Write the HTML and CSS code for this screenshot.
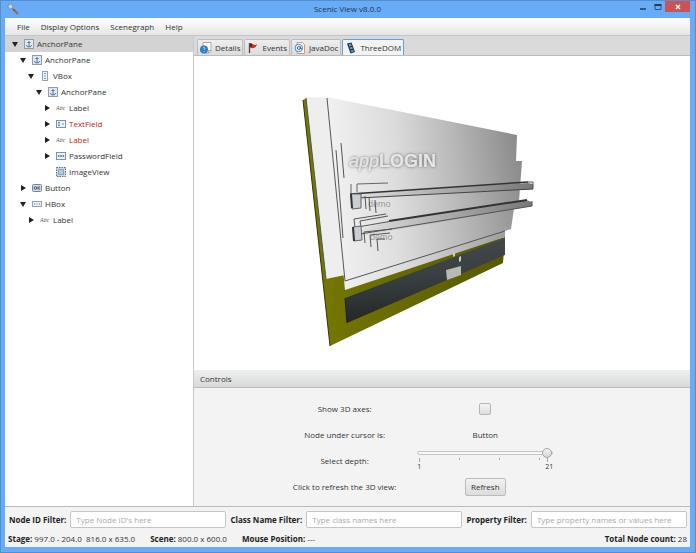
FILE: index.html
```html
<!DOCTYPE html>
<html lang="en">
<head>
<meta charset="utf-8">
<title>Scenic View v8.0.0</title>
<link rel="stylesheet" href="styles.css">
</head>
<body>
<svg class="defs" aria-hidden="true">
  <symbol id="open" viewBox="0 0 8 8"><path d="M1 2h6L4 7z" fill="#222"/></symbol>
  <symbol id="closed" viewBox="0 0 8 8"><path d="M2 1v6l5-3z" fill="#222"/></symbol>
  <symbol id="anchor" viewBox="0 0 10 10"><rect x=".5" y=".5" width="9" height="9" fill="#e0e8f0" stroke="#8f9dab"/><path d="M5 2v6M3.500 3.500h3M2.500 6q0 2 2.500 2t2.500-2" fill="none" stroke="#54789b"/></symbol>
  <symbol id="vbox" viewBox="0 0 10 10"><rect x="2.500" y=".5" width="5" height="9" fill="#edf3f8" stroke="#94a3b1"/><path d="M4 2.500h2M4 5h2M4 7.500h2" stroke="#7c9dbb"/></symbol>
  <symbol id="hbox" viewBox="0 0 10 10"><rect x=".5" y="2.500" width="9" height="5" fill="#edf3f8" stroke="#94a3b1"/><path d="M2.500 4v2M5 4v2M7.500 4v2" stroke="#9ab0c4"/></symbol>
  <symbol id="field" viewBox="0 0 10 10"><rect x=".5" y="1.500" width="9" height="7" fill="#edf4fb" stroke="#7e92a5"/><path d="M2 3.500h2M3 3.500v3M2 6.500h2M6 5h2" stroke="#6c94bb"/></symbol>
  <symbol id="password" viewBox="0 0 10 10"><rect x=".5" y="1.500" width="9" height="7" fill="#edf4fb" stroke="#7e92a5"/><path d="M2 5h1.500M4.300 5h1.500M6.600 5h1.500" stroke="#345b82" stroke-width="1.500"/></symbol>
  <symbol id="image" viewBox="0 0 10 10"><rect x=".5" y=".5" width="9" height="9" fill="#cbdbea" stroke="#55718c" stroke-dasharray="1.500 1"/><rect x="2.500" y="2.500" width="5" height="5" fill="#b3cbe0" stroke="#8ba4ba"/></symbol>
  <symbol id="ok" viewBox="0 0 10 10"><rect x=".5" y="1.500" width="9" height="7" rx="1" fill="#cfd9e3" stroke="#74889b"/><circle cx="3.400" cy="5" r="1.300" fill="none" stroke="#2d4257" stroke-width=".8"/><path d="M6 3.500v3M8 3.500 6.200 5 8 6.500" fill="none" stroke="#2d4257" stroke-width=".8"/></symbol>
</svg>
<div class="window">
  <header class="titlebar">
    <svg class="app-icon" viewBox="0 0 12 12"><path d="m6 6 5 5" stroke="#9b6844" stroke-width="2"/><path d="m5 5 3 3" stroke="#4d5661"/><circle cx="3.500" cy="3.500" r="2.500" fill="#b9d4ec" stroke="#83909d"/></svg>
    <h1>Scenic View v8.0.0</h1>
    <div class="window-buttons">
      <button aria-label="Minimize"><svg viewBox="0 0 8 8"><path d="M1 6h6" stroke="#253a55" stroke-width="1.500"/></svg></button>
      <button aria-label="Maximize"><svg viewBox="0 0 8 8"><path d="M1 2v4.500h6V2" fill="none" stroke="#3b5475"/><path d="M.5 2h7" stroke="#253a55" stroke-width="2"/></svg></button>
      <button class="close" aria-label="Close"><svg viewBox="0 0 8 8"><path d="m2 2 4 4M6 2 2 6" stroke="#fff" stroke-width="1.400"/></svg></button>
    </div>
  </header>
  <div class="content">
    <nav class="menu"><button>File</button><button>Display Options</button><button>Scenegraph</button><button>Help</button></nav>
    <main class="split">
      <aside class="tree">
        <ul>
          <li><div class="row selected"><svg><use href="#open"/></svg><svg class="icon"><use href="#anchor"/></svg>AnchorPane</div>
            <ul>
              <li><div class="row"><svg><use href="#open"/></svg><svg class="icon"><use href="#anchor"/></svg>AnchorPane</div>
                <ul>
                  <li><div class="row"><svg><use href="#open"/></svg><svg class="icon"><use href="#vbox"/></svg>VBox</div>
                    <ul>
                      <li><div class="row"><svg><use href="#open"/></svg><svg class="icon"><use href="#anchor"/></svg>AnchorPane</div>
                        <ul>
                          <li><div class="row"><svg><use href="#closed"/></svg><span class="abc">Abc</span>Label</div></li>
                          <li><div class="row changed"><svg><use href="#closed"/></svg><svg class="icon"><use href="#field"/></svg>TextField</div></li>
                          <li><div class="row changed"><svg><use href="#closed"/></svg><span class="abc">Abc</span>Label</div></li>
                          <li><div class="row"><svg><use href="#closed"/></svg><svg class="icon"><use href="#password"/></svg>PasswordField</div></li>
                          <li><div class="row"><svg></svg><svg class="icon"><use href="#image"/></svg>ImageView</div></li>
                        </ul>
                      </li>
                    </ul>
                  </li>
                </ul>
              </li>
              <li><div class="row"><svg><use href="#closed"/></svg><svg class="icon"><use href="#ok"/></svg>Button</div></li>
              <li><div class="row"><svg><use href="#open"/></svg><svg class="icon"><use href="#hbox"/></svg>HBox</div>
                <ul><li><div class="row"><svg><use href="#closed"/></svg><span class="abc">Abc</span>Label</div></li></ul>
              </li>
            </ul>
          </li>
        </ul>
      </aside>
      <section class="detail">
        <div class="tabs" role="tablist">
          <button role="tab"><svg viewBox="0 0 12 12"><path d="M3 .5h8v9L8.500 11H3z" fill="#fff" stroke="#a5aaae"/><path d="M11 8.500H8.500V11" fill="#e3e7ea" stroke="#a5aaae"/><circle cx="4" cy="7.500" r="4" fill="#2f7dc5"/><path d="M2.800 6.200q1.200-1.500 2.200 0Q5 7 4 7.800M4 9v1" fill="none" stroke="#a9d6fa"/></svg>Details</button>
          <button role="tab"><svg viewBox="0 0 12 12"><path d="M2.500 1v10" stroke="#454545" stroke-width="1.300"/><path d="M3 1.500q2 0 3.500 1t4-.5L8.500 5q-2 2-5.500.5z" fill="#c5301f"/><path d="M3 1.500h2v3H3z" fill="#641b16"/></svg>Events</button>
          <button role="tab"><svg viewBox="0 0 12 12"><path d="M3 .5h5.500l2 2v9H3z" fill="#fff" stroke="#c99e7a"/><circle cx="4.800" cy="6" r="3.800" fill="#e7f2fc" stroke="#4b8cc8"/><circle cx="4.800" cy="6" r="1.500" fill="none" stroke="#316fa9"/><path d="M6.500 4.500v2.300q1 .5 1.500-.8" fill="none" stroke="#316fa9"/></svg>JavaDoc</button>
          <button role="tab" aria-selected="true" class="active"><svg viewBox="0 0 12 12"><path d="m2 1.500 4.500-1L10 10l-4.500 1.500z" fill="#24303e"/><path d="m3.500 2.200 2.400-.6.8 2.200-2.400.7zm1.200 3.300 2.400-.7.7 2-2.400.7zM5.800 8.500l2.400-.7.6 1.600-2.400.8z" fill="#5d9cda"/></svg>ThreeDOM</button>
        </div>
        <div class="viewport">
          <svg class="scene" viewBox="194 55 496 314" role="img" aria-label="3D view of the scene">
            <defs>
              <linearGradient id="face"><stop stop-color="#f1f1f1"/><stop offset=".35" stop-color="#dadada"/><stop offset=".65" stop-color="#b4b4b4"/><stop offset="1" stop-color="#828282"/></linearGradient>
              <linearGradient id="shine" x2="0" y2="1"><stop stop-color="#fff" stop-opacity="0"/><stop offset="1" stop-color="#fff" stop-opacity=".2"/></linearGradient>
              <linearGradient id="olive"><stop stop-color="#777a00"/><stop offset="1" stop-color="#575900"/></linearGradient>
              <linearGradient id="bar" x2=".15" y2="1"><stop stop-color="#454a4e"/><stop offset=".5" stop-color="#3a3f42"/><stop offset="1" stop-color="#222624"/></linearGradient>
              <linearGradient id="rail"><stop stop-color="#e5e5e5"/><stop offset="1" stop-color="#777"/></linearGradient>
              <filter id="glow" x="-20%" y="-40%" width="140%" height="180%"><feDropShadow dx="0" dy="0" stdDeviation="1.500" flood-color="#555" flood-opacity=".9"/></filter>
            </defs>
            <path d="M303 99 307 97 345 280 505 236 503 262 330 345z" fill="url(#olive)"/>
            <path d="m303 99 27 246" stroke="#303410"/>
            <path d="m306 96 22 1 17 177-19 4z" fill="#eee"/>
            <path d="m306 97 20 181" stroke="#555" fill="none"/>
            <path d="m327 96 190 38-1 26h6l-3 40-5 7-3 21-6 2v6l-160 53z" fill="url(#face)"/>
            <path d="m327 96 190 38-1 26h6l-3 40-5 7-3 21-6 2v6l-160 53z" fill="url(#shine)"/>
            <path d="m327 97 18 183 160-50" fill="none" stroke="#555"/>
            <path d="m336 149 7 88M341 142l3 35" fill="none" stroke="#555"/>
            <g filter="url(#glow)" fill="#e6e6e6"><text class="logo" x="349" y="166"><tspan class="thin">app</tspan>LOGIN</text></g>
            <path d="M351 183v9M357 191v-8l31-1" fill="none" stroke="#666"/>
            <path d="m350 193 178-11 5 1v5l-181 9z" fill="url(#rail)"/>
            <path d="m350 193 178-12" stroke="#333" stroke-width="1.500"/><path d="m358 197 175-9" stroke="#444"/>
            <path d="M527 181h6v7" stroke="#555" fill="none"/>
            <path d="M351 193h10v14l-9 1z" fill="#c8ced3" stroke="#666"/><path d="m351 193 1 14" stroke="#333" stroke-width="2"/>
            <text class="demo" x="368" y="206">demo</text>
            <path d="m365 195 1 13M369 196l1 14M375 199l1 13" stroke="#555"/>
            <path d="m389 220 137-21 6 2v4l-178 31v-5z" fill="url(#rail)"/>
            <path d="m389 220 138-21" stroke="#333" stroke-width="2"/>
            <path d="m354 234 178-29v-5M358 226l34-6" stroke="#555" fill="none"/>
            <path d="m355 227-1-9 32-5M361 226l-1-6 28-5" fill="none" stroke="#555"/>
            <path d="m353 226 8-1 1 14-8 1z" fill="#c8ced3" stroke="#666"/><path d="m353 226 1 14" stroke="#333" stroke-width="2"/>
            <text class="demo" x="370" y="239">demo</text>
            <path d="m365 242-1-11 28-3M371 246l-1-12 20-2M378 250l-1-12h8" fill="none" stroke="#555"/>
            <path d="m345 297 160-60v17l-158 68z" fill="url(#bar)"/>
            <path d="m345 297 2 25" stroke="#222"/>
            <path d="m446 269 15-4v9l-14 5z" fill="#b8b8b4"/>
            <path d="m453 252 2-1v4l-2 1zM459 256l2-1v5l-2 1z" fill="#ccc"/>
          </svg>
        </div>
        <h2>Controls</h2>
        <div class="controls">
          <label for="axes">Show 3D axes:</label><input type="checkbox" id="axes">
          <span>Node under cursor is:</span><output>Button</output>
          <label for="depth">Select depth:</label>
          <div class="slider"><input type="range" id="depth" min="1" max="21" value="21">
            <svg class="ticks" viewBox="0 0 136 4"><path d="M2.500 0v4M42.500 0v2M82.500 0v2M122.500 0v2M130.500 0v4" stroke="#aaa"/></svg>
            <div class="scale"><span>1</span><span>21</span></div></div>
          <span>Click to refresh the 3D view:</span><button class="refresh">Refresh</button>
        </div>
      </section>
    </main>
    <form class="filters">
      <label for="node">Node ID Filter:</label><input id="node" placeholder="Type Node ID's here">
      <label for="class">Class Name Filter:</label><input id="class" placeholder="Type class names here">
      <label for="property">Property Filter:</label><input id="property" placeholder="Type property names or values here">
    </form>
    <footer class="status">
      <span><b>Stage:</b> 997.0 - 204.0 &nbsp;816.0 x 635.0</span><span><b>Scene:</b> 800.0 x 600.0</span><span><b>Mouse Position:</b> ---</span><span class="count"><b>Total Node count:</b> 28</span>
    </footer>
  </div>
</div>
</body>
</html>
```
FILE: styles.css
```css
* { box-sizing: border-box; }
body { margin: 0; font: 8px/16px "Open Sans", "Noto Sans", sans-serif; color: #333; }
button, input { font: inherit; color: inherit; margin: 0; }
button { padding: 0; border: 0; background: none; }
ul { list-style: none; margin: 0; padding: 0; }
.defs { position: absolute; width: 0; height: 0; }
.window { display: flex; flex-direction: column; min-height: 100vh; padding: 0 5px 5px 4px; background: #68abf6; border: 1px solid #568ecb; }
.titlebar { display: grid; grid-template-columns: 1fr auto 1fr; height: 17px; }
.titlebar h1 { margin: 0; font-size: 8px; font-weight: 400; line-height: 16px; color: #24364c; }
.app-icon { width: 12px; height: 12px; margin: 2px; }
.window-buttons { display: flex; justify-content: flex-end; height: 11px; }
.window-buttons button { display: grid; place-items: center; width: 15px; }
.window-buttons svg { width: 8px; height: 8px; }
.window-buttons .close { width: 25px; background: #cc5355; }
.content { flex: 1; display: flex; flex-direction: column; background: #f3f3f3; }
.menu { display: flex; gap: 11px; height: 18px; padding: 0 12px; background: linear-gradient(#fff, #e5e5e5); border-bottom: 1px solid #c5c5c5; }
.menu button { line-height: 17px; }
.split { flex: 1; display: grid; grid-template-columns: 189px 1fr; border-bottom: 1px solid #bbb; }
.tree { background: #fff; border-right: 1px solid #c8c8c8; }
.tree ul ul { padding-left: 8px; }
.row { display: flex; align-items: center; height: 16px; padding-left: 6px; }
.row svg { width: 8px; height: 8px; margin-right: 5px; flex: none; }
.row .icon { width: 10px; height: 10px; margin-right: 3px; }
.abc { width: 10px; margin-right: 3px; font: italic 6px/16px "Liberation Serif", serif; color: #555; }
.selected { background: #d3d3d3; }
.changed { color: #bd2018; }
.detail { display: flex; flex-direction: column; min-width: 0; }
.tabs { display: flex; gap: 1px; align-items: flex-end; height: 20px; padding: 0 3px; background: #dadada; border-bottom: 1px solid #bbb; }
.tabs button { display: flex; align-items: center; gap: 3px; height: 16px; padding: 0 2px; border: 1px solid #bdbdbd; border-bottom: 0; border-radius: 2px 2px 0 0; background: linear-gradient(#eee, #dcdcdc); }
.tabs svg { width: 12px; height: 12px; }
.tabs .active { border: 1px solid #5ba1dd; border-bottom: 0; background: #f3f3f3; }
.viewport { flex: 1; display: flex; background: #fff; }
.scene { width: 100%; height: auto; }
.logo { font: bold 18px "Liberation Sans", sans-serif; }
.thin { font-weight: 400; font-style: italic; }
.demo { font: 9px "Liberation Sans", sans-serif; fill: #999; }
.detail h2 { margin: 0; padding: 0 6px; font-size: 8px; font-weight: 400; line-height: 17px; background: linear-gradient(#eee, #d8dada); border-bottom: 1px solid #bbb; }
.controls { display: grid; grid-template-columns: 43% 136px; grid-auto-rows: 26px; column-gap: 10px; align-items: center; justify-items: center; padding: 8px 0 6px; }
.controls > :nth-child(odd) { padding-left: 88px; white-space: nowrap; }
.controls input[type="checkbox"] { appearance: none; width: 12px; height: 12px; border: 1px solid #b5b5b5; border-radius: 2px; background: linear-gradient(#f5f5f5, #ddd); }
.slider { display: flex; flex-direction: column; width: 100%; padding-bottom: 2px; }
.slider input { appearance: none; width: 100%; height: 10px; background: none; }
.slider input::-webkit-slider-runnable-track { height: 4px; border: 1px solid #c5c5c5; border-radius: 2px; background: #f8f8f8; }
.slider input::-webkit-slider-thumb { appearance: none; width: 10px; height: 10px; margin-top: -4px; border: 1px solid #a5a5a5; border-radius: 50%; background: linear-gradient(#f4f4f4, #d5d5d5); }
.ticks { width: 100%; height: 4px; }
.scale { display: flex; justify-content: space-between; font-size: 7px; line-height: 10px; }
.refresh { height: 18px; padding: 0 5px; border: 1px solid #bbb; border-radius: 2px; background: linear-gradient(#f2f2f2, #dcdcdc); }
.filters { display: flex; align-items: center; gap: 4px; padding: 4px 3px 1px 4px; }
.filters label, .status b { font-weight: 700; color: #222; }
.filters label { white-space: nowrap; }
.filters input { flex: 1; min-width: 0; height: 17px; padding: 0 5px; border: 1px solid #c5c5c5; border-radius: 2px; background: #fff; }
.filters input::placeholder { color: #aaa; }
.status { display: flex; gap: 15px; padding: 2px 3px 0; line-height: 16px; }
.count { margin-left: auto; }
```
